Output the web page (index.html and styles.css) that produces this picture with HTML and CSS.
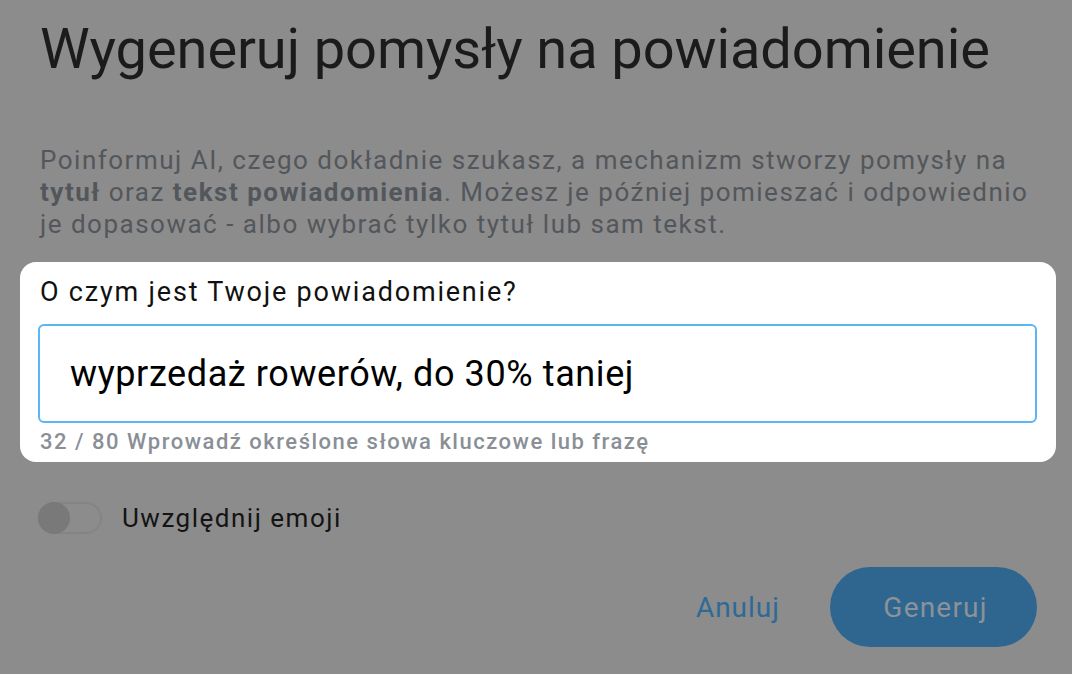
FILE: index.html
```html
<!DOCTYPE html>
<html lang="pl">
<head>
<meta charset="utf-8">
<title>Wygeneruj pomysły na powiadomienie</title>
<link rel="stylesheet" href="styles.css">
</head>
<body>
<div class="dialog">
  <h1 class="title">Wygeneruj pomysły na powiadomienie</h1>
  <p class="intro">Poinformuj AI, czego dokładnie szukasz, a mechanizm stworzy pomysły na <b>tytuł</b> oraz <b>tekst powiadomienia</b>. Możesz je później pomieszać i odpowiednio je dopasować - albo wybrać tylko tytuł lub sam tekst.</p>
  <div class="spot">
    <label class="field-label" for="topic">O czym jest Twoje powiadomienie?</label>
    <div class="field">
      <input id="topic" class="field-input" type="text" value="wyprzedaż rowerów, do 30% taniej">
    </div>
    <div class="helper">32 / 80 Wprowadź określone słowa kluczowe lub frazę</div>
  </div>
  <div class="toggle-row">
    <span class="toggle"><span class="knob"></span></span>
    <span class="toggle-label">Uwzględnij emoji</span>
  </div>
  <div class="actions">
    <button class="btn-text" type="button">Anuluj</button>
    <button class="btn-primary" type="button">Generuj</button>
  </div>
</div>
</body>
</html>
```

FILE: styles.css
```css
* { box-sizing: border-box; }
html, body { margin: 0; padding: 0; }
body {
  width: 1072px;
  height: 674px;
  overflow: hidden;
  background: #8c8c8c;
  font-family: Roboto, "Noto Sans", sans-serif;
}
.dialog {
  display: flex;
  flex-direction: column;
  padding: 17px 35px 0 40px;
}
.title {
  margin: 0;
  font-size: 56px;
  line-height: 64px;
  font-weight: 400;
  color: #1b1b1c;
  letter-spacing: -0.1px;
  white-space: nowrap;
}
.intro {
  margin: 63px 0 0;
  font-size: 26px;
  line-height: 32px;
  color: #53575b;
  letter-spacing: 1.5px;
}
.intro b { font-weight: 700; }
.spot {
  margin: 22px 0 0 -20px;
  width: 1036px;
  background: #ffffff;
  border-radius: 16px;
  padding: 14px 19px 6px 18px;
  display: flex;
  flex-direction: column;
}
.field-label {
  padding-left: 2px;
  font-size: 27px;
  line-height: 32px;
  color: #111111;
  letter-spacing: 1.8px;
}
.field {
  margin-top: 16px;
}
.field-input {
  display: block;
  width: 100%;
  height: 99px;
  border: 2px solid #5bb6f3;
  border-radius: 6px;
  padding: 0 30px;
  font-family: Roboto, "Noto Sans", sans-serif;
  font-size: 36px;
  letter-spacing: 0.6px;
  color: #000000;
  background: #fff;
  outline: none;
}
.helper {
  margin-top: 5px;
  padding-left: 2px;
  font-size: 22px;
  line-height: 28px;
  font-weight: 500;
  color: #8a8f96;
  letter-spacing: 1.5px;
}
.toggle-row {
  margin-top: 40px;
  display: flex;
  align-items: center;
  gap: 20px;
  margin-left: -2px;
}
.toggle {
  position: relative;
  width: 64px;
  height: 32px;
  border-radius: 16px;
  border: 2px solid #848484;
  background: #8c8c8c;
}
.knob {
  position: absolute;
  left: -2px;
  top: -2px;
  width: 32px;
  height: 32px;
  border-radius: 50%;
  background: #797979;
}
.toggle-label {
  font-size: 26px;
  line-height: 32px;
  color: #141414;
  letter-spacing: 1.5px;
}
.actions {
  margin-top: 33px;
  display: flex;
  justify-content: flex-end;
  align-items: center;
  gap: 50px;
}
.btn-text {
  border: none;
  background: none;
  padding: 0;
  font-family: Roboto, "Noto Sans", sans-serif;
  font-size: 28px;
  color: #2e6a96;
  letter-spacing: 1px;
}
.btn-primary {
  width: 207px;
  height: 80px;
  border: none;
  border-radius: 40px;
  padding: 0 0 0 4px;
  background: #2e6690;
  font-family: Roboto, "Noto Sans", sans-serif;
  font-size: 28px;
  color: #8b9298;
  letter-spacing: 1.2px;
}
```
